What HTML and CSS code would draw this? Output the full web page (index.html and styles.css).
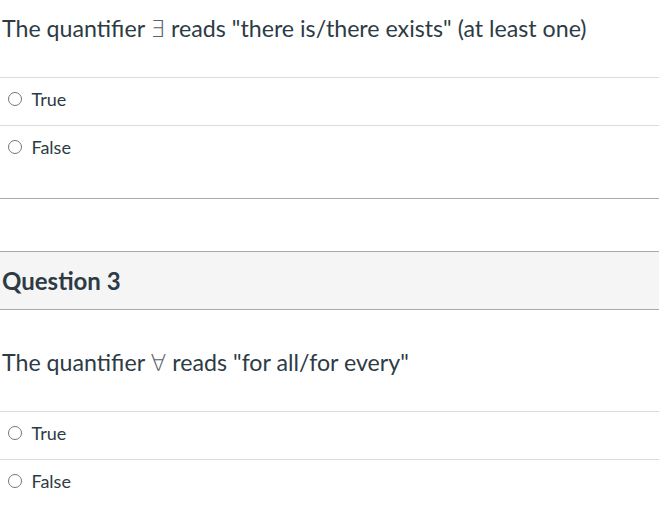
FILE: index.html
```html
<!DOCTYPE html>
<html>
<head>
<meta charset="utf-8">
<link rel="stylesheet" href="styles.css">
</head>
<body>
<div class="question">
  <div class="question-text">The quantifier <span class="sym">∃</span> reads "there is/there exists" (at least one)</div>
  <div class="answers">
    <label class="answer"><span class="radio"></span><span class="label">True</span></label>
    <label class="answer"><span class="radio"></span><span class="label">False</span></label>
  </div>
</div>
<div class="question">
  <div class="q-header">Question 3</div>
  <div class="question-text second">The quantifier <span class="sym">∀</span> reads "for all/for every"</div>
  <div class="answers">
    <label class="answer"><span class="radio"></span><span class="label">True</span></label>
    <label class="answer"><span class="radio"></span><span class="label">False</span></label>
  </div>
</div>
</body>
</html>
```
FILE: styles.css
```css
html, body {
  margin: 0;
  padding: 0;
  background: #fff;
}
body {
  font-family: Lato, "Open Sans", sans-serif;
  color: #2d3b45;
  width: 659px;
}
.question-text {
  font-size: 23.2px;
  line-height: 28px;
  padding: 14px 0 34px 2px;
}
.question-text.second {
  padding: 38px 0 34px 2px;
}
.sym {
  font-family: "DejaVu Sans", sans-serif;
  font-weight: 200;
  color: #5a6268;
}
.answers {
  border-top: 1px solid #dcdcdc;
}
.question:first-child .answers {
  border-bottom: 1px solid #aaaaaa;
  padding-bottom: 25px;
  margin-bottom: 52px;
}
.answer {
  display: flex;
  align-items: center;
  height: 22px;
  line-height: 22px;
  padding: 10px 0 15px 0;
  border-bottom: 1px solid #dcdcdc;
  font-size: 18px;
}
.answer:last-child {
  border-bottom: none;
}
.radio {
  width: 12px;
  height: 12px;
  border: 1.5px solid #777;
  border-radius: 50%;
  margin-left: 7.5px;
  margin-right: 10px;
  box-sizing: content-box;
}
.q-header {
  background: #f5f5f5;
  border-top: 1px solid #aaaaaa;
  border-bottom: 1px solid #aaaaaa;
  height: 57px;
  display: flex;
  align-items: center;
  padding-left: 2px;
  font-size: 24px;
  font-weight: 700;
}
```
